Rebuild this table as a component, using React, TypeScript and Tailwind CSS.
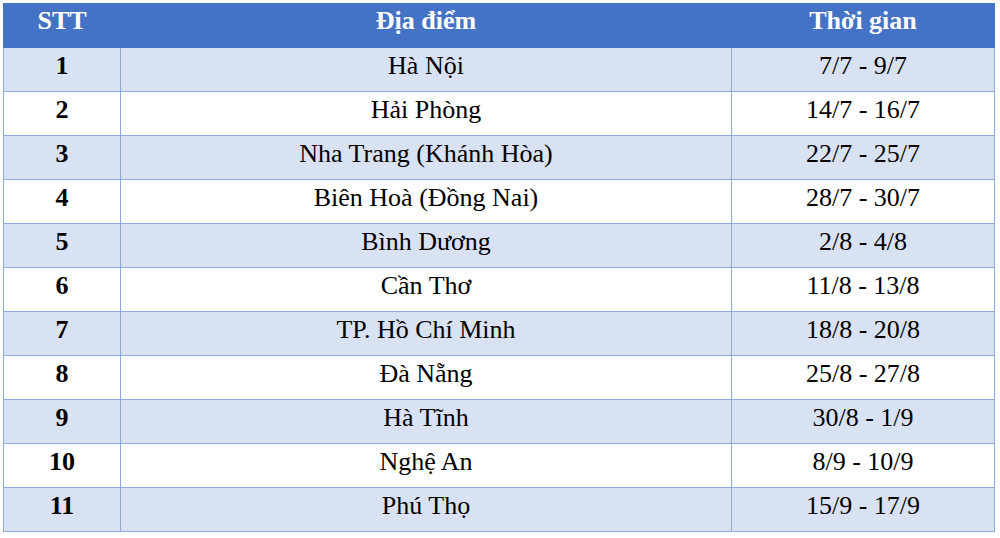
const rows: [string, string, string][] = [
  ["1", "Hà Nội", "7/7 - 9/7"],
  ["2", "Hải Phòng", "14/7 - 16/7"],
  ["3", "Nha Trang (Khánh Hòa)", "22/7 - 25/7"],
  ["4", "Biên Hoà (Đồng Nai)", "28/7 - 30/7"],
  ["5", "Bình Dương", "2/8 - 4/8"],
  ["6", "Cần Thơ", "11/8 - 13/8"],
  ["7", "TP. Hồ Chí Minh", "18/8 - 20/8"],
  ["8", "Đà Nẵng", "25/8 - 27/8"],
  ["9", "Hà Tĩnh", "30/8 - 1/9"],
  ["10", "Nghệ An", "8/9 - 10/9"],
  ["11", "Phú Thọ", "15/9 - 17/9"],
];

export default function App() {
  return (
    <div className="h-[538px] w-[1000px] bg-white pl-[3px] pt-[3px] font-['Liberation_Serif',serif] text-[26px] text-black">
      <table className="w-[991px] table-fixed border-collapse">
        <colgroup>
          <col className="w-[117px]" />
          <col className="w-[611px]" />
          <col className="w-[263px]" />
        </colgroup>
        <thead>
          <tr className="h-[44px] bg-[#4472c4] font-bold text-white">
            <th className="border border-[#4472c4] pb-[10px] align-middle leading-none">STT</th>
            <th className="border border-[#4472c4] pb-[10px] align-middle leading-none">Địa điểm</th>
            <th className="border border-[#4472c4] pb-[10px] align-middle leading-none">Thời gian</th>
          </tr>
        </thead>
        <tbody>
          {rows.map(([n, place, time], i) => (
            <tr key={n} className={i % 2 === 0 ? "h-[44px] bg-[#d9e2f3]" : "h-[44px] bg-white"}>
              <td className="border border-[#8eaadb] pb-[8px] text-center align-middle font-bold leading-none">{n}</td>
              <td className="border border-[#8eaadb] pb-[8px] text-center align-middle leading-none">{place}</td>
              <td className="border border-[#8eaadb] pb-[8px] text-center align-middle leading-none">{time}</td>
            </tr>
          ))}
        </tbody>
      </table>
    </div>
  );
}
